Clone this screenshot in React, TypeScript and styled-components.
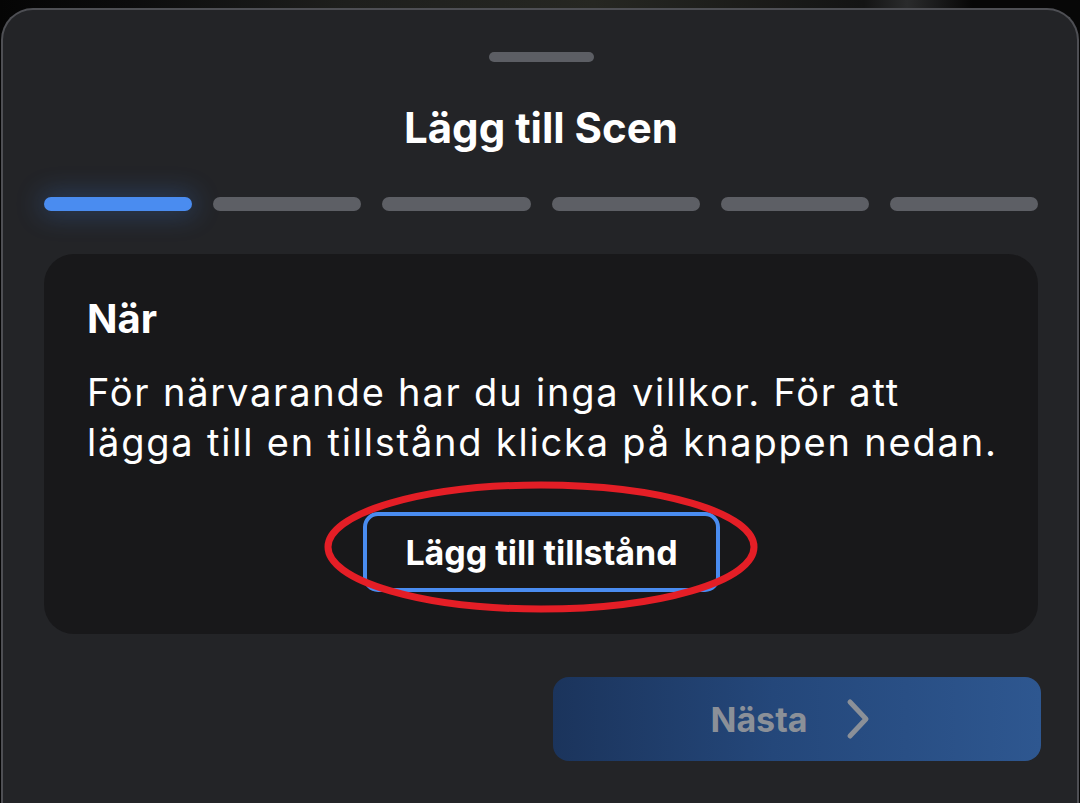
import React from "react";
import styled, { createGlobalStyle } from "styled-components";

const GlobalStyle = createGlobalStyle`
	html, body {
		margin: 0;
		padding: 0;
		height: 100%;
		background: #050505;
		font-family: Inter, "Noto Sans", "Liberation Sans", sans-serif;
		-webkit-font-smoothing: antialiased;
	}
	#root {
		height: 100%;
	}
`;

const Backdrop = styled.div`
	height: 803px;
	overflow: hidden;
	display: flex;
	flex-direction: column;
	background: linear-gradient(
		90deg,
		#050505 0%,
		#0c0c0d 12%,
		#1e1f1d 32%,
		#262722 55%,
		#141414 80%,
		#2a2b2c 84%,
		#070707 90%
	);
`;

const Sheet = styled.div`
	flex: 1;
	margin: 8px 1px 0 1px;
	border: 2px solid #4e4f54;
	border-bottom: none;
	border-radius: 32px 32px 0 0;
	background: #232427;
	padding: 42px 39px 0 41px;
	display: flex;
	flex-direction: column;
	align-items: stretch;
`;

const Handle = styled.div`
	align-self: center;
	width: 105px;
	height: 10px;
	border-radius: 5px;
	background: #5c5e64;
`;

const Title = styled.h1`
	margin: 42px 0 0;
	text-align: center;
	font-size: 42px;
	line-height: 48px;
	font-weight: 700;
	color: #ffffff;
`;

const Steps = styled.div`
	margin-top: 45px;
	display: grid;
	grid-template-columns: repeat(6, 1fr);
	column-gap: 21px;
`;

const Step = styled.div<{ $active?: boolean }>`
	height: 14px;
	border-radius: 7px;
	background: ${(p) => (p.$active ? "#4a8cf0" : "#5d5f65")};
	box-shadow: ${(p) =>
		p.$active ? "0 0 26px 4px rgba(64, 130, 230, 0.28)" : "none"};
`;

const Card = styled.section`
	margin-top: 43px;
	background: #18181a;
	border-radius: 30px;
	padding: 41px 14px 42px 43px;
	display: flex;
	flex-direction: column;
`;

const CardHeading = styled.h2`
	margin: 0;
	font-size: 40px;
	line-height: 48px;
	font-weight: 700;
	color: #ffffff;
`;

const CardText = styled.p`
	margin: 24px 0 0;
	font-size: 38px;
	line-height: 50px;
	font-weight: 400;
	letter-spacing: 1.8px;
	color: #ffffff;
`;

const ActionWrap = styled.div`
	position: relative;
	align-self: center;
	margin-top: 45px;
	margin-left: -28px;
`;

const OutlineButton = styled.button`
	width: 357px;
	height: 80px;
	border: 4px solid #4a8cf0;
	border-radius: 15px;
	background: #18181a;
	color: #ffffff;
	font-family: inherit;
	font-size: 34px;
	font-weight: 700;
	display: flex;
	align-items: center;
	justify-content: center;
	padding: 0;
`;

const Annotation = styled.svg`
	position: absolute;
	left: -38px;
	top: -33px;
	width: 438px;
	height: 134px;
	pointer-events: none;
	overflow: visible;
`;

const Footer = styled.div`
	margin-top: 43px;
	margin-right: -3px;
	display: flex;
	justify-content: flex-end;
`;

const NextButton = styled.button`
	width: 488px;
	height: 84px;
	border: none;
	border-radius: 16px;
	background: linear-gradient(90deg, #1b345c 0%, #24477a 45%, #2e5790 100%);
	color: #8b9098;
	font-family: inherit;
	font-size: 34px;
	font-weight: 700;
	display: flex;
	align-items: center;
	justify-content: center;
	gap: 38px;
	padding: 0 14px 0 0;
`;

function Chevron() {
	return (
		<svg width="24" height="42" viewBox="0 0 24 42" fill="none">
			<path
				d="M4 4 L20 21 L4 38"
				stroke="#8b9098"
				strokeWidth="5"
				strokeLinecap="round"
				strokeLinejoin="round"
			/>
		</svg>
	);
}

export default function App() {
	const steps = [true, false, false, false, false, false];

	return (
		<>
			<GlobalStyle />
			<Backdrop>
				<Sheet>
					<Handle />
					<Title>Lägg till Scen</Title>
					<Steps>
						{steps.map((active, i) => (
							<Step key={i} $active={active} />
						))}
					</Steps>

					<Card>
						<CardHeading>När</CardHeading>
						<CardText>
							För närvarande har du inga villkor. För att
							<br />
							lägga till en tillstånd klicka på knappen nedan.
						</CardText>
						<ActionWrap>
							<OutlineButton>Lägg till tillstånd</OutlineButton>
							<Annotation viewBox="0 0 438 134">
								<ellipse
									cx="216"
									cy="68"
									rx="213"
									ry="62"
									stroke="#e41e26"
									strokeWidth="7"
									fill="none"
								/>
							</Annotation>
						</ActionWrap>
					</Card>

					<Footer>
						<NextButton>
							Nästa
							<Chevron />
						</NextButton>
					</Footer>
				</Sheet>
			</Backdrop>
		</>
	);
}
